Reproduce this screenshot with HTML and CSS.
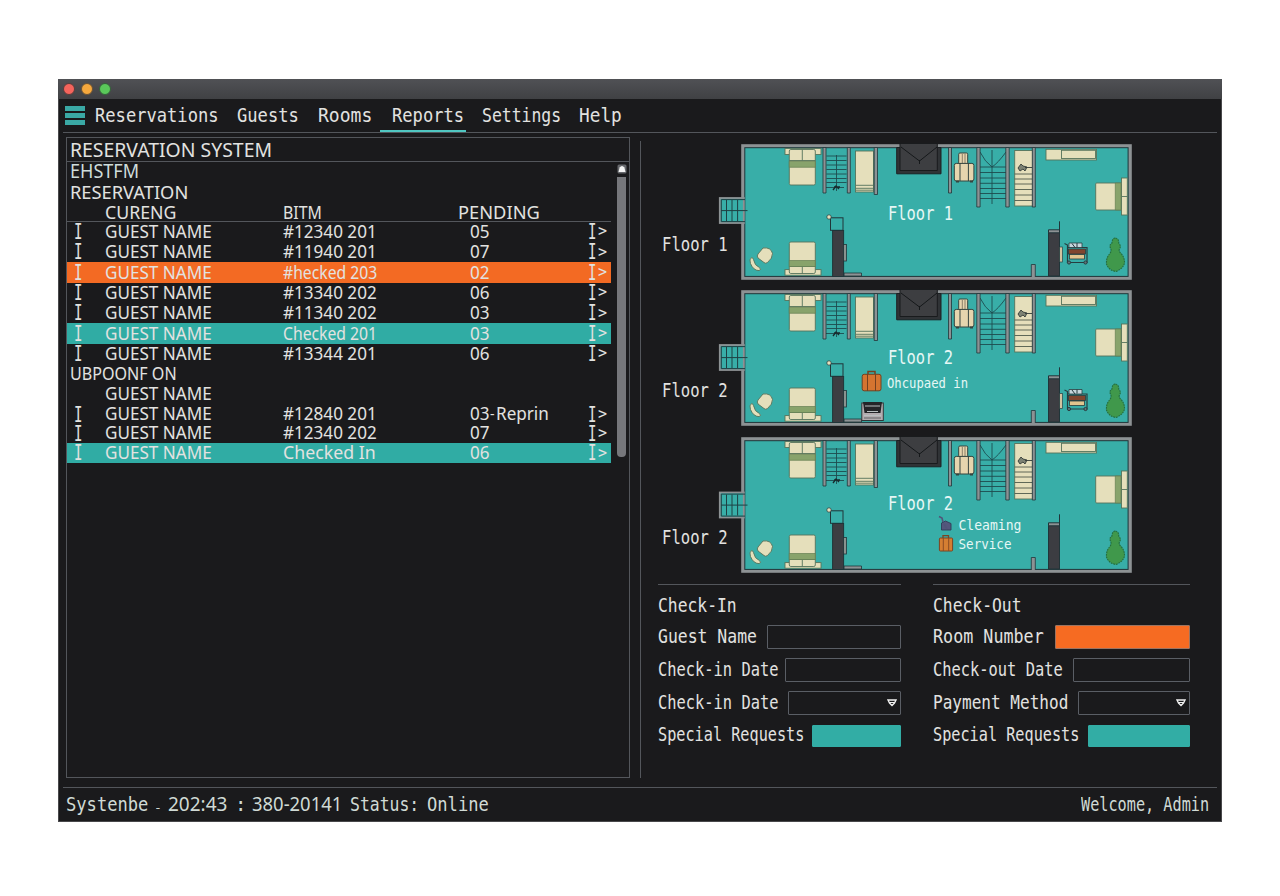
FILE: index.html
```html
<!DOCTYPE html>
<html lang="en">
<head>
<meta charset="utf-8">
<title>Reservation System</title>
<link rel="stylesheet" href="styles.css">
</head>
<body>
<div class="window">
  <header class="titlebar"><i class="dot red"></i><i class="dot amber"></i><i class="dot green"></i></header>
  <nav class="menu">
    <div class="burger"><i></i><i></i><i></i></div>
    <a class="k90">Reservations</a><a class="k90">Guests</a><a class="k95">Rooms</a><a class="k90">Reports</a><a class="k87">Settings</a><a class="k93">Help</a>
    <div class="underline"></div>
  </nav>
  <main class="main">
    <section class="panel">
      <h1><span class="k97">RESERVATION SYSTEM</span></h1>
      <div class="panel-body">
        <div class="list">
          <div class="line fade"><span class="k95">EHSTFM</span></div>
          <div class="line"><span>RESERVATION</span></div>
          <div class="row head"><i></i><span class="k97">CURENG</span><span class="k87">BITM</span><span class="pend">PENDING</span></div>
          <div class="row"><b>I</b><span class="k93">GUEST NAME</span><span class="k93">#12340 201</span><span class="k93">05</span><b>I</b><em>&gt;</em></div>
          <div class="row"><b>I</b><span class="k93">GUEST NAME</span><span class="k93">#11940 201</span><span class="k93">07</span><b>I</b><em>&gt;</em></div>
          <div class="row orange"><b>I</b><span class="k93">GUEST NAME</span><span class="k86">#hecked 203</span><span class="k93">02</span><b>I</b><em>&gt;</em></div>
          <div class="row"><b>I</b><span class="k93">GUEST NAME</span><span class="k93">#13340 202</span><span class="k93">06</span><b>I</b><em>&gt;</em></div>
          <div class="row"><b>I</b><span class="k93">GUEST NAME</span><span class="k93">#11340 202</span><span class="k93">03</span><b>I</b><em>&gt;</em></div>
          <div class="row teal"><b>I</b><span class="k93">GUEST NAME</span><span class="k86">Checked 201</span><span class="k93">03</span><b>I</b><em>&gt;</em></div>
          <div class="row"><b>I</b><span class="k93">GUEST NAME</span><span class="k93">#13344 201</span><span class="k93">06</span><b>I</b><em>&gt;</em></div>
          <div class="line low"><span class="k88">UBPOONF ON</span></div>
          <div class="row low"><i></i><span class="k93">GUEST NAME</span></div>
          <div class="row low"><b>I</b><span class="k93">GUEST NAME</span><span class="k93">#12840 201</span><div class="note"><span class="k93">03</span><small>-</small><span class="k93">Reprin</span></div><b>I</b><em>&gt;</em></div>
          <div class="row low"><b>I</b><span class="k93">GUEST NAME</span><span class="k93">#12340 202</span><span class="k93">07</span><b>I</b><em>&gt;</em></div>
          <div class="row low teal"><b>I</b><span class="k93">GUEST NAME</span><span class="k97">Checked In</span><span class="k93">06</span><b>I</b><em>&gt;</em></div>
        </div>
        <div class="scroll">
          <svg width="10" height="11" viewBox="0 0 10 11"><rect x=".5" y=".5" width="9" height="9" rx="1.5" fill="#66686c"/><path d="M1.5 8 2.6 3.5Q5 .5 7.4 3.5L8.5 8Z" fill="#f4f4f4"/></svg>
          <div class="thumb"></div>
        </div>
      </div>
    </section>
    <section class="side">
      <div class="floor">
        <span class="floor-name k82">Floor 1</span>
        <svg width="425" height="146" viewBox="715 140 425 146">
          <defs>
            <g id="entry" stroke="#1e4043" fill="#38aea8">
              <rect x="719.8" y="198" width="24" height="25" stroke="#8d9294" stroke-width="1.8"/>
              <path d="M721.3 221.6V199.6H745M721.3 221.6H745M726.5 200v21M732 200v21M737.6 200v21M721 210.6h26.5" fill="none"/>
            </g>
            <g id="plan">
              <rect x="743" y="146" width="387" height="132" fill="#38aea8" stroke="#8d9294" stroke-width="3.6"/>
              <rect x="744.8" y="147.7" width="383.3" height="128.7" fill="none" stroke="#203539"/>
              <g fill="#e5dfbb" stroke="#55735b" stroke-width=".9">
                <rect x="785" y="148.5" width="36" height="6"/>
                <rect x="789.3" y="149.5" width="26" height="35.5" rx="1.5"/><path d="M802.3 149.5v11M789.3 160.5h26"/>
                <rect x="785" y="269.6" width="36" height="5.6"/>
                <rect x="789.3" y="242" width="26" height="31.5" rx="1.5"/><path d="M789.3 266.5h26M802.3 266.5v7"/>
                <rect x="1121.5" y="178" width="5.8" height="37"/><path d="M1121.5 196.5h6"/>
                <rect x="1095.7" y="183" width="25.8" height="27" rx="1"/>
                <rect x="855.5" y="151" width="18" height="41"/><path d="M856 185.3h17M856 188.3h17M856 190.2h17"/>
                <rect x="1046" y="149.3" width="50.5" height="10.7"/><rect x="1061.5" y="150.3" width="34" height="8.2"/>
                <path d="M763 248q8-1 9.500 5.500 0 5-5 9-2 1.500-3.500 0l-6-4.500q-1.500-2 0-4z"/>
                <path d="M751.500 257.600q-2.500 1.500-1 6 3 7 8.500 7 2.800-.8.500-3-5-2-6-8-.8-2.500-2-2z"/>
              </g>
              <g fill="#88a36b" stroke="#647e52" stroke-width=".7"><path d="M789.300 161.300h26v6h-26zM789.300 260.500h26v6h-26zM1115.300 183h5.700v27h-5.700z"/></g>
              <g fill="none" stroke="#1e4c4f" stroke-width=".9">
                <path d="M826.500 156h20M826.500 160.500h20M826.500 165h20M826.500 169.500h20M826.500 174h20M826.500 178.500h20M826.500 182.500h20M826 187.500h18M836.500 155v36"/>
                <path d="M980 167h26M980 172.500h26M980 178h26M980 183.300h26M980 188.500h26M980 193.500h26M980 198.500h26M992 150v54M980 152q5 10 12 15q6-4 14-15"/>
              </g>
              <path d="M833 190l3-4 3 3m-5-2h6" stroke="#172a2c" fill="none" stroke-width="1.300"/>
              <rect x="1014.700" y="150.500" width="18" height="55.500" fill="#e5dfbb" stroke="#55735b" stroke-width=".9"/>
              <path d="M1014.700 174h18M1014.700 179h18M1014.700 184h18M1014.700 189.500h18M1014.700 195h18M1014.700 200.500h18" stroke="#4e5a4c" stroke-width=".9"/>
              <path d="M1018 168l3-4 2 2 4 1-2 4-2-2-3 2zM1025 167.500h7" fill="#7d8273" stroke="#343c38" stroke-width=".9"/>
              <g fill="#8d9294" stroke="#203539" stroke-width=".8">
                <path d="M823 147.500h3v45.500h-3zM847.300 147.500h3v45.500h-3zM874.200 147.500h3.300v47h-3.300zM948.500 147.500h3v45.500h-3zM976.800 147.500h3.300v59.500h-3.300zM1005.800 147.500h3.400v59.500h-3.400zM1032.300 147.500h3v59.500h-3zM1031.300 277v-12.500h4V277M844 276v-3h17.500v3z"/>
              </g>
              <path d="M896.700 147.500h44.300v26.300h-44.300z" fill="#303336" stroke="#1b2023"/><path d="M900 143.500h37.300v27H900z" fill="#3d3e41" stroke="#191b1d"/><path d="M901 147 919.500 161 937 147M919.500 160v4" fill="none" stroke="#15181a"/>
              <g fill="#e6d5ae" stroke="#35443f" stroke-width="1"><rect x="958.700" y="153" width="9" height="11" rx="1.200"/><path d="M962.300 154v9M965 154v9" stroke="#8a7f68"/><rect x="954.300" y="163.400" width="19.600" height="17.600" rx="2"/><path d="M960 163v18M968.400 163v18"/><path d="M956 181.500h3M970 181.500h3" stroke-width="2"/></g>
              <g stroke="#203539"><rect x="832.600" y="230.500" width="11" height="46" fill="#3c3d42"/><rect x="830.500" y="217.800" width="12.500" height="12.500" fill="none"/><circle cx="829" cy="217" r="2.200" fill="#e8e1bd" stroke-width=".7"/><rect x="843.600" y="244.500" width="2.800" height="16.500" fill="#8a928f" stroke-width=".8"/>
              <path d="M1048.500 276V230.500h11V276z" fill="#3c3d42"/><path d="M1048.500 229.800h11v3h-11z" fill="#8d9294"/><path d="M1059.500 221.300V276"/></g>
              <path d="M1115.500 238q3.500 1 3.200 5 2.800 3 .8 6-1 2 1 4 4.200 4 4 10-1.500 6-9 8.500-7-1.500-9-7.500-.5-6 3-10 2.500-3 1-6-1.500-3 1.500-5 0-4.500 3.500-5z" fill="#40984b" stroke="#246e3e" stroke-width="1.100" stroke-dasharray="1.800 .8"/>
            </g>
            <g id="cart" stroke="#273c3f">
              <rect x="1059.700" y="247" width="2.600" height="15" fill="#dccaa5" stroke-width=".7"/>
              <path d="M1064.500 243.500l3 1.500v17.500h19.500v-15h-19" fill="none" stroke-width="1.200"/><path d="M1069 243h13v4.500h-13z" fill="#c5d6dc" stroke-width=".8"/><path d="M1072 243.500l3 4M1077 243v4"/><rect x="1068.500" y="249" width="17" height="5" fill="#80452e" stroke-width=".8"/><rect x="1069.500" y="254.500" width="15" height="4.500" fill="#e2c58e" stroke-width=".8"/><circle cx="1069" cy="262.500" r="1.600" fill="#60767a"/><circle cx="1085.500" cy="262.500" r="1.600" fill="#60767a"/>
            </g>
          </defs>
          <use href="#plan"/><use href="#entry"/><use href="#cart"/>
          <text x="888" y="219.500" textLength="65" lengthAdjust="spacingAndGlyphs">Floor 1</text>
        </svg>
      </div>
      <div class="floor">
        <span class="floor-name k82">Floor 2</span>
        <svg width="425" height="147" viewBox="715 140 425 147">
          <use href="#plan"/><use href="#entry" y="1"/><use href="#cart" y=".5"/>
          <text x="888" y="217.800" textLength="65" lengthAdjust="spacingAndGlyphs">Floor 2</text>
          <text class="small" x="887" y="242" textLength="81" lengthAdjust="spacingAndGlyphs">Ohcupaed in</text>
          <path d="M868 228v-2.500h7v2.500" fill="none" stroke="#75401f" stroke-width="1.500"/><rect x="862.200" y="228.300" width="18.800" height="16.500" rx="2" fill="#d57430" stroke="#75401f"/><path d="M867.500 228v17M875.500 228v17" stroke="#75401f"/>
          <rect x="861.800" y="257" width="21.500" height="17.500" fill="#b4adb0" stroke="#303638"/><path d="M863 256h19l-1.500 11h-16z" fill="#242528"/><path d="M865 260h15M867 265.500h11M864 269.500h17" stroke="#b9bfc0"/><path d="M864 272h17" stroke="#4e5254" stroke-width=".8"/>
        </svg>
      </div>
      <div class="floor">
        <span class="floor-name k82">Floor 2</span>
        <svg width="425" height="147" viewBox="715 140 425 147">
          <use href="#plan"/><use href="#entry" y="1.500"/>
          <text x="888" y="216.600" textLength="65" lengthAdjust="spacingAndGlyphs">Floor 2</text>
          <text class="small" x="958.500" y="237" textLength="63" lengthAdjust="spacingAndGlyphs">Cleaming</text>
          <text class="small" x="958.500" y="255.500" textLength="53" lengthAdjust="spacingAndGlyphs">Service</text>
          <path d="M941.500 237v-7l4-2 5.500 2.500V237z" fill="#54577c" stroke="#303d57" stroke-width=".9"/><path d="M939 223.500l3 1.500 1 4M944 231l3 5" fill="none" stroke="#515579" stroke-width="1.600"/>
          <path d="M943 245v-2.300h5.500v2.300" fill="none" stroke="#7b4522" stroke-width="1.300"/><rect x="939.400" y="245" width="13.200" height="13" rx="1" fill="#d57e32" stroke="#7b4522"/><path d="M943.300 245v13M948.700 245v13" stroke="#8b4c23"/>
        </svg>
      </div>
      <div class="forms">
        <form class="form">
          <h2 class="k86">Check-In</h2>
          <label><span class="k87">Guest Name</span><i class="field w134"></i></label>
          <label><span class="k81">Check-in Date</span><i class="field w116"></i></label>
          <label><span class="k81">Check-in Date</span><i class="field w113"><svg width="10" height="8" viewBox="0 0 10 8"><path d="M1 1h8L7.500 4 5 6.500 2.500 4z" fill="none" stroke="#f1f1f1" stroke-width="1.300"/><path d="M2 3.500h6" stroke="#f1f1f1"/></svg></i></label>
          <label><span class="k80">Special Requests</span><i class="field w89 fill-teal"></i></label>
        </form>
        <form class="form">
          <h2 class="k86">Check-Out</h2>
          <label><span class="k88">Room Number</span><i class="field w135 fill-orange"></i></label>
          <label><span class="k81">Check-out Date</span><i class="field w117"></i></label>
          <label><span class="k84">Payment Method</span><i class="field w112"><svg width="10" height="8" viewBox="0 0 10 8"><path d="M1 1h8L7.500 4 5 6.500 2.500 4z" fill="none" stroke="#f1f1f1" stroke-width="1.300"/><path d="M2 3.500h6" stroke="#f1f1f1"/></svg></i></label>
          <label><span class="k80">Special Requests</span><i class="field w102 fill-teal"></i></label>
        </form>
      </div>
    </section>
  </main>
  <footer class="status">
    <span class="k90">Systenbe</span><small>-</small><span class="num">202:43</span><span>:</span><span class="num k97">380-20141</span><span class="k87">Status:</span><span class="k90">Online</span><span class="k80">Welcome, Admin</span>
  </footer>
</div>
</body>
</html>
```
FILE: styles.css
```css
* { box-sizing: border-box; }
body { margin: 0; padding: 79px 58px 0; background: #fff; font: 19px/1 "DejaVu Sans Mono", monospace; color: #e2e2e0; }
i, em { font-style: normal; }
b { font-weight: 400; }
.window { width: 1164px; height: 743px; display: flex; flex-direction: column; background: #1a1a1c; border: 1px solid #48484b; border-top: 0; }
.titlebar { height: 20px; flex: none; margin: 0 -1px; padding: 0 5px; display: flex; align-items: center; gap: 6px; background: linear-gradient(#505155, #404144); }
.dot { width: 12px; height: 12px; border-radius: 50%; border: 1px solid #5a3b3a; }
.red { background: #f4645c; }
.amber { background: #f5a83d; border-color: #6a5235; }
.green { background: #5ac85a; border-color: #35603a; }

.menu { position: relative; height: 34px; flex: none; margin: 0 4px; display: grid; grid-template-columns: 32px 142px 81px 74px 90px 97px 60px; align-items: center; border-bottom: 1px solid #53565b; white-space: nowrap; }
.burger { display: grid; gap: 2px; width: 20px; margin-left: 2px; }
.burger i { height: 5px; background: #3aa9a5; }
.underline { position: absolute; left: 317px; bottom: 0; width: 86px; height: 2px; background: #50c7c2; }
.menu a, .k80, .k81, .k82, .k84, .k86, .k87, .k88, .k90, .k93, .k95, .k97 { transform-origin: 0 50%; white-space: nowrap; }
.k80 { transform: scaleX(.8); }
.k81 { transform: scaleX(.81); }
.k82 { transform: scaleX(.82); }
.k84 { transform: scaleX(.845); }
.k86 { transform: scaleX(.86); }
.k87 { transform: scaleX(.865); }
.k88 { transform: scaleX(.88); }
.k90 { transform: scaleX(.9); }
.k93 { transform: scaleX(.935); }
.k95 { transform: scaleX(.95); }
.k97 { transform: scaleX(.97); }

.main { height: 655px; flex: none; margin: 0 4px; display: flex; border-bottom: 1px solid #53565b; }
.panel { width: 564px; height: 641px; margin: 4px 0 0 3px; border: 1px solid #53565b; }
.panel h1 { margin: 0; height: 24px; padding-left: 3px; display: flex; align-items: center; font: 400 20px/1 "Noto Sans", sans-serif; border-bottom: 1px solid #53565b; }
.panel-body { display: flex; }
.list { width: 544px; flex: none; font: 18.3px/1 "Noto Sans", sans-serif; white-space: nowrap; }
.list span { padding-bottom: 1.4px; }
.line { height: 20.3px; padding-left: 3px; display: flex; align-items: center; }
.fade { font-size: 19px; color: #cfdddb; }
.row { height: 20.35px; display: grid; grid-template-columns: 38px 178px 187px 117px 11px 13px; align-items: center; }
.head { height: 19px; border-bottom: 1px solid #53565b; }
.head span { padding-bottom: 3px; }
.pend { margin-left: -12px; }
.low { height: 19.8px; }
.row b { padding-left: 6px; font: 18px/.86 "DejaVu Sans Mono", monospace; transform: scale(.78, 1.15); transform-origin: 10px 50%; }
.row b:nth-child(5) { padding-left: 0; transform-origin: 5px 50%; }
.row em { font: 15px/1 "DejaVu Sans Mono", monospace; }
.note { display: grid; grid-template-columns: 20px 6px 60px; align-items: center; }
.note span { padding-bottom: 3px; }
.note small { font-size: 14px; }
.orange { background: #f36a23; }
.teal { background: #30aca4; }
.scroll { width: 10px; margin: 2px 0 0 6px; }
.scroll svg { display: block; }
.thumb { width: 9px; height: 280px; margin-top: 2px; background: #76777b; border-radius: 0 0 4px 4px; }

.side { margin: 8px 0 0 10px; width: 577px; height: 637px; padding-left: 17px; border-left: 1px solid #53565b; }
.floor { display: flex; height: 146.5px; }
.floor:first-child { margin-top: -1px; height: 146px; }
.floor-name { width: 57px; margin: 95px 0 0 4px; flex: none; height: 20px; }
.floor svg { flex: none; display: block; margin-left: -4px; }
.floor text { font: 19px "DejaVu Sans Mono", monospace; fill: #e6f7f5; }
.floor .small { font-size: 14.5px; }
.forms { display: grid; grid-template-columns: 243px 257px; column-gap: 32.5px; margin: 5px 0 0 -.5px; }
.form { border-top: 1px solid #53565b; padding-top: 5px; }
.form h2 { margin: 0; height: 30px; display: flex; align-items: center; font-size: 19px; font-weight: 400; }
.form label { display: flex; height: 33px; align-items: center; justify-content: space-between; }
.form label:last-child span { padding-bottom: 2px; }
.form label span { width: 0; }
.field { height: 24px; border: 1px solid #5a5e65; border-radius: 1px; display: flex; align-items: center; justify-content: flex-end; padding-right: 3px; }
.w89 { width: 89px; } .w102 { width: 102px; } .w112 { width: 112px; } .w113 { width: 113px; } .w116 { width: 116px; } .w117 { width: 117px; } .w134 { width: 134px; } .w135 { width: 135px; }
.fill-teal { height: 22px; background: #32ada5; border-color: #32ada5; }
.fill-orange { background: #f66b22; border-color: #9c7461; }
.status { height: 33px; margin-left: 7px; display: grid; grid-template-columns: 88px 14px 67px 17px 98px 77px 654px 140px; align-items: center; white-space: nowrap; color: #d0dad5; }
.status small { font-size: 13px; padding-top: 6px; }
.num { font-family: "Noto Sans", sans-serif; }
```
